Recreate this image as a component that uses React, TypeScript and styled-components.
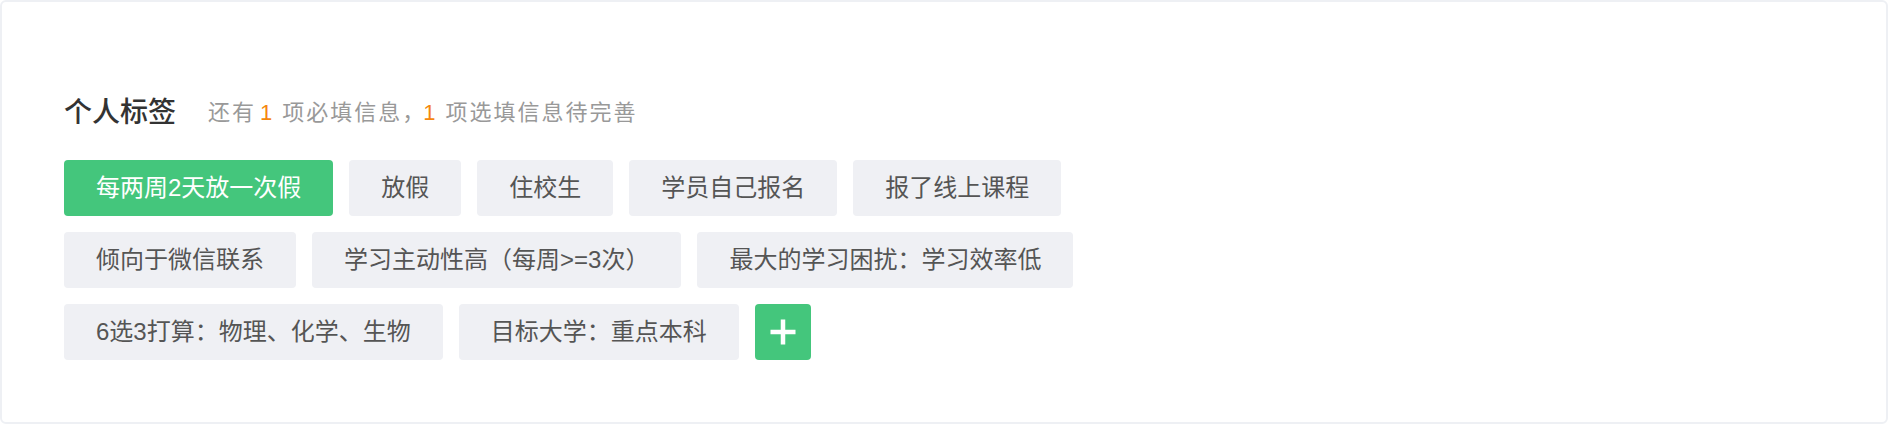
import React from "react";
import styled, { createGlobalStyle } from "styled-components";

const GlobalStyle = createGlobalStyle`
  html, body {
    margin: 0;
    padding: 0;
    background: #ffffff;
  }
  * {
    box-sizing: border-box;
  }
`;

const FONT = `"Liberation Sans", "Noto Sans CJK SC", sans-serif`;

const Card = styled.section`
  width: 100%;
  height: 424px;
  border: 2px solid #eef0f4;
  border-radius: 6px;
  background: #ffffff;
  padding: 90px 62px 0;
  font-family: ${FONT};
`;

const Header = styled.header`
  display: flex;
  align-items: center;
  height: 42px;
  margin-bottom: 26px;
`;

const Title = styled.h2`
  margin: 0;
  font-size: 28px;
  line-height: 42px;
  font-weight: 500;
  color: #333333;
`;

const Hint = styled.p`
  margin: 0 0 0 32px;
  font-size: 22px;
  letter-spacing: 2px;
  font-feature-settings: "halt";
  line-height: 42px;
  color: #999999;
`;

const Count = styled.span<{ $lead: number }>`
  display: inline-block;
  margin: 0 8px 0 ${(p) => p.$lead}px;
  color: #f5870f;
`;

const TagList = styled.div`
  display: flex;
  flex-wrap: wrap;
  gap: 16px;
  max-width: 1140px;
`;

const Tag = styled.button<{ $active?: boolean }>`
  height: 56px;
  padding: 0 32px;
  border: none;
  border-radius: 4px;
  font-family: ${FONT};
  font-size: 24px;
  line-height: 56px;
  white-space: nowrap;
  cursor: pointer;
  background: ${(p) => (p.$active ? "#44c67c" : "#eff0f4")};
  color: ${(p) => (p.$active ? "#ffffff" : "#555555")};
`;

const AddButton = styled.button`
  width: 56px;
  height: 56px;
  padding: 0;
  border: none;
  border-radius: 4px;
  background: #44c67c;
  display: flex;
  align-items: center;
  justify-content: center;
  cursor: pointer;
`;

const tags: { label: string; active?: boolean }[] = [
  { label: "每两周2天放一次假", active: true },
  { label: "放假" },
  { label: "住校生" },
  { label: "学员自己报名" },
  { label: "报了线上课程" },
  { label: "倾向于微信联系" },
  { label: "学习主动性高（每周>=3次）" },
  { label: "最大的学习困扰：学习效率低" },
  { label: "6选3打算：物理、化学、生物" },
  { label: "目标大学：重点本科" },
];

const PlusIcon = () => (
  <svg width="26" height="26" viewBox="0 0 26 26" aria-hidden="true">
    <rect x="0.5" y="10.75" width="25" height="4.5" fill="#ffffff" />
    <rect x="10.75" y="0.5" width="4.5" height="25" fill="#ffffff" />
  </svg>
);

export default function App() {
  return (
    <>
      <GlobalStyle />
      <Card>
        <Header>
          <Title>个人标签</Title>
          <Hint>
            还有<Count $lead={4}>1</Count>项必填信息，<Count $lead={8}>1</Count>项选填信息待完善
          </Hint>
        </Header>
        <TagList>
          {tags.map((t) => (
            <Tag key={t.label} $active={t.active}>
              {t.label}
            </Tag>
          ))}
          <AddButton aria-label="添加标签">
            <PlusIcon />
          </AddButton>
        </TagList>
      </Card>
    </>
  );
}
